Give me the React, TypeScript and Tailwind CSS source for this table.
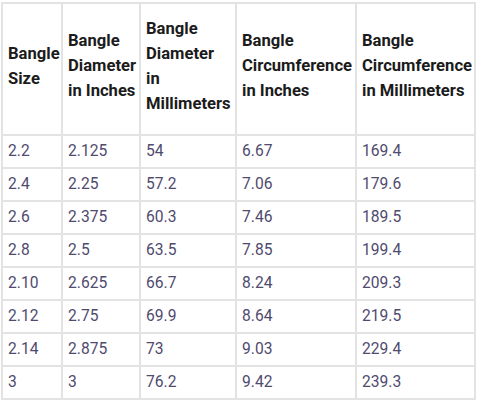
import React from 'react';

const headers = [
  ['Bangle', 'Size'],
  ['Bangle', 'Diameter', 'in Inches'],
  ['Bangle', 'Diameter', 'in', 'Millimeters'],
  ['Bangle', 'Circumference', 'in Inches'],
  ['Bangle', 'Circumference', 'in Millimeters'],
];

const rows = [
  ['2.2', '2.125', '54', '6.67', '169.4'],
  ['2.4', '2.25', '57.2', '7.06', '179.6'],
  ['2.6', '2.375', '60.3', '7.46', '189.5'],
  ['2.8', '2.5', '63.5', '7.85', '199.4'],
  ['2.10', '2.625', '66.7', '8.24', '209.3'],
  ['2.12', '2.75', '69.9', '8.64', '219.5'],
  ['2.14', '2.875', '73', '9.03', '229.4'],
  ['3', '3', '76.2', '9.42', '239.3'],
];

const widths = ['w-[60px]', 'w-[78px]', 'w-[96px]', 'w-[120px]', 'w-[119px]'];

export default function App() {
  return (
    <div className="w-[480px] h-[403px] bg-white pt-[2px] pl-[1px]" style={{ fontFamily: 'Roboto, "Noto Sans", sans-serif' }}>
      <table className="table-fixed border-collapse border-2 border-[#e3e3e3] w-[474px]">
        <colgroup>
          {widths.map((w, i) => (
            <col key={i} className={w} />
          ))}
        </colgroup>
        <thead>
          <tr className="h-[132px]">
            {headers.map((lines, i) => (
              <th
                key={i}
                className="border-2 border-[#e3e3e3] pl-[5px] pr-0 pb-[7px] text-left align-middle text-[16.6px] leading-[25px] font-bold text-[#1b1b1b] whitespace-nowrap"
              >
                {lines.map((l, k) => (
                  <div key={k}>{l}</div>
                ))}
              </th>
            ))}
          </tr>
        </thead>
        <tbody>
          {rows.map((r, i) => (
            <tr key={i} className="h-[33px]">
              {r.map((c, j) => (
                <td
                  key={j}
                  className="border-2 border-[#e3e3e3] px-[5px] pb-[1px] align-middle text-[15.6px] leading-[20px] text-[#4f4a6e]"
                >
                  {c}
                </td>
              ))}
            </tr>
          ))}
        </tbody>
      </table>
    </div>
  );
}
